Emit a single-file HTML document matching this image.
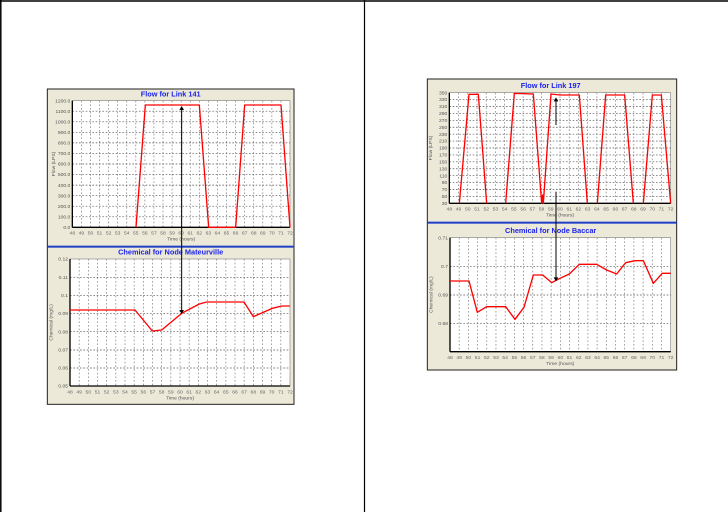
<!DOCTYPE html>
<html><head><meta charset="utf-8"><style>
html,body{margin:0;padding:0;background:#fff;width:728px;height:512px;overflow:hidden}
svg{display:block}
text{font-family:"Liberation Sans",sans-serif}
</style></head><body>
<svg id="s" width="728" height="512" viewBox="0 0 728 512" xmlns="http://www.w3.org/2000/svg">
<rect x="0" y="0" width="728" height="512" fill="#fff"/>
<line x1="0" y1="1" x2="728" y2="1" stroke="#000" stroke-width="1.5"/>
<line x1="0.8" y1="0" x2="0.8" y2="512" stroke="#000" stroke-width="1.5"/>
<line x1="364.5" y1="0" x2="364.5" y2="512" stroke="#000" stroke-width="1.2"/>
<g id="L" transform="translate(40,80) scale(0.33333)">
<rect x="22" y="27" width="740" height="946" fill="#ECE9D8" stroke="#222" stroke-width="3"/>
<rect x="22" y="497" width="740" height="6" fill="#1f3fc8"/>
<text x="392" y="49" font-size="22" font-weight="bold" fill="#1a22ee" text-anchor="middle">Flow for Link 141</text>
<text x="392" y="524" font-size="22" font-weight="bold" fill="#1a22ee" text-anchor="middle">Chemical for Node Mateurville</text>
</g>
<g id="R" transform="translate(420,70) scale(0.33333)">
<rect x="22" y="27" width="748" height="873" fill="#ECE9D8" stroke="#222" stroke-width="3"/>
<rect x="22" y="455" width="748" height="6" fill="#1f3fc8"/>
<text x="392" y="54" font-size="22" font-weight="bold" fill="#1a22ee" text-anchor="middle">Flow for Link 197</text>
<text x="392" y="489" font-size="22" font-weight="bold" fill="#1a22ee" text-anchor="middle">Chemical for Node Baccar</text>
</g>
</svg>
<script>
var NS="http://www.w3.org/2000/svg";
function el(g,t,a,txt){var e=document.createElementNS(NS,t);for(var k in a)e.setAttribute(k,a[k]);if(txt!==undefined)e.textContent=txt;g.appendChild(e);return e;}
function plot(g,x0,y0,x1,y1,hy,ylabels,ytitle,xtitle,pts){
 el(g,'rect',{x:x0,y:y0,width:x1-x0,height:y1-y0,fill:'#fff',stroke:'#888','stroke-width':2});
 var n=24,dx=(x1-x0)/n;
 for(var i=0;i<=n;i++){var x=x0+i*dx;
  if(i>0&&i<n)el(g,'line',{x1:x,y1:y0,x2:x,y2:y1,stroke:'#777','stroke-width':2,'stroke-dasharray':'5,6'});
  el(g,'text',{x:x,y:y1+22,'font-size':15,fill:'#666','text-anchor':'middle'},String(48+i));}
 for(var j=0;j<hy.length;j++){var y=hy[j];
  if(y>y0+1&&y<y1-1)el(g,'line',{x1:x0,y1:y,x2:x1,y2:y,stroke:'#555','stroke-width':2,'stroke-dasharray':'5,5'});
  if(ylabels[j])el(g,'text',{x:x0-6,y:y+5,'font-size':15,fill:'#555','text-anchor':'end'},ylabels[j]);}
 el(g,'line',{x1:x0,y1:y0,x2:x0,y2:y1,stroke:'#000','stroke-width':4});
 el(g,'line',{x1:x0,y1:y1,x2:x1,y2:y1,stroke:'#000','stroke-width':4});
 el(g,'text',{x:(x0+x1)/2,y:y1+40,'font-size':15,fill:'#555','text-anchor':'middle'},xtitle);
 var cy=(y0+y1)/2,tx=x0-52;
 el(g,'text',{x:tx,y:cy,'font-size':15,fill:'#555','text-anchor':'middle',transform:'rotate(-90 '+tx+' '+cy+')'},ytitle);
 if(pts)el(g,'polyline',{points:pts,fill:'none',stroke:'#f00','stroke-width':4,'stroke-linejoin':'round'});
}
function line(g,pts){el(g,'polyline',{points:pts,fill:'none',stroke:'#f00','stroke-width':4,'stroke-linejoin':'round'});}
var L=document.getElementById('L'),R=document.getElementById('R');
var hy=[],yl=[];for(var k=0;k<=12;k++){hy.push(62+k*380/12);yl.push((1200-k*100)+'.0');}
plot(L,97,62,750,442,hy,yl,'Flow (LPS)','Time (hours)','288,442 316,75 478,75 506,442 587,442 614,75 723,75 750,442');
var hy2=[537,592,646,700,755,810,864,918];
plot(L,90,537,750,918,hy2,['0.12','0.11','0.1','0.09','0.08','0.07','0.06','0.05'],'Chemical (mg/L)','Time (hours)','90,690 285,690 337,753 365,750 425,700 478,672 500,666 612,666 640,710 697,685 725,678 750,678');
el(L,'line',{x1:425,y1:84,x2:425,y2:698,stroke:'#000','stroke-width':3});
el(L,'polygon',{points:'418,90 432,90 425,78',fill:'#000'});
el(L,'polygon',{points:'418,690 432,690 425,702',fill:'#000'});
var hy3=[],yl3=[];for(var k=0;k<=16;k++){hy3.push(68+k*332/16);yl3.push(String(350-k*20));}
plot(R,88,68,752,400,hy3,yl3,'Flow (LPS)','Time (hours)','118,400 147,73 175,73 200,400');
line(R,'257,400 283,70 340,72 365,400 368,375 370,400 393,72 420,75 478,75 502,400');
line(R,'532,400 557,75 614,75 640,400');
line(R,'670,400 697,75 724,75 752,400');
plot(R,90,503,752,845,[503,589,675,760,845],['0.71','0.7','0.69','0.68',''],'Chemical (mg/L)','Time (hours)','90,633 147,633 172,727 200,710 257,710 285,748 312,712 340,615 368,615 395,638 420,625 448,612 478,583 530,583 560,600 590,612 617,578 645,572 670,572 700,640 727,610 752,610');
el(R,'line',{x1:408,y1:165,x2:408,y2:90,stroke:'#000','stroke-width':3});
el(R,'polygon',{points:'401,94 415,94 408,82',fill:'#000'});
el(R,'line',{x1:408,y1:365,x2:408,y2:628,stroke:'#000','stroke-width':3});
el(R,'polygon',{points:'401,622 415,622 408,634',fill:'#000'});
</script>
</body></html>
